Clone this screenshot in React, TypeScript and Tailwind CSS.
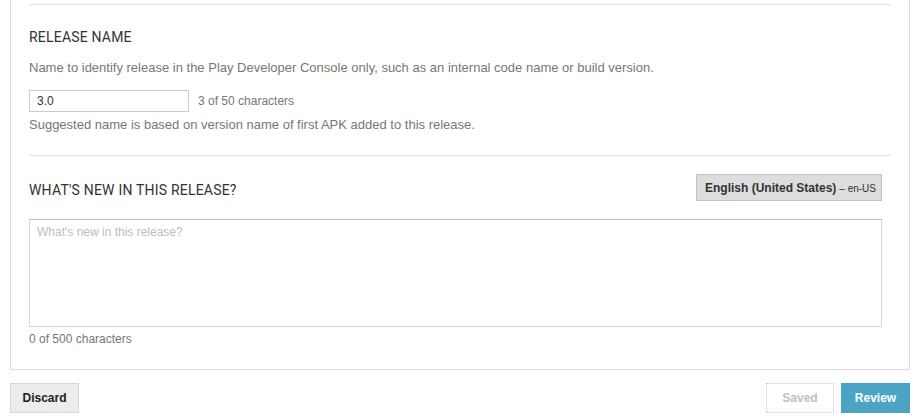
import React from "react";

const arial = { fontFamily: '"Liberation Sans", Arial, sans-serif' };

export default function App() {
  return (
    <div className="w-[923px] h-[419px] bg-white overflow-hidden pl-[10px] pr-[13px]" style={arial}>
      <div className="border border-t-0 border-[#dcdcdc] pl-[18px] pr-[18px] pb-[22px]">
        <div className="pt-[4px]">
          <div className="border-t border-[#e0e0e0]" />
        </div>
        <div className="pt-[22px] pb-[22px]">
          <h2 className="text-[14px] leading-[20px] tracking-[0.2px] text-[#333] uppercase" style={{ fontFamily: "Roboto, sans-serif" }}>
            Release name
          </h2>
          <p className="mt-[13px] text-[13px] leading-[16px] text-[#777]">
            Name to identify release in the Play Developer Console only, such as an internal code name or build version.
          </p>
          <div className="mt-[14px] flex items-center gap-[9px]">
            <div className="w-[160px] h-[22px] border border-[#cccccc] px-[7px] flex items-center text-[12px] text-[#333]">
              3.0
            </div>
            <span className="text-[12px] text-[#777]">3 of 50 characters</span>
          </div>
          <p className="mt-[5px] text-[13px] leading-[16px] text-[#777]">
            Suggested name is based on version name of first APK added to this release.
          </p>
        </div>
        <div className="border-t border-[#e0e0e0]" />
        <div className="pt-[18px] pr-[9px]">
          <div className="flex items-start justify-between h-[27px]">
            <h2 className="mt-[6px] text-[14px] leading-[20px] tracking-[0.2px] text-[#333] uppercase" style={{ fontFamily: "Roboto, sans-serif" }}>
              What's new in this release?
            </h2>
            <div className="h-[27px] w-[186px] bg-[#dddddd] border border-[#c2c2c2] flex items-center justify-center whitespace-nowrap">
              <div className="flex items-baseline gap-[3px] pl-[3px] text-[#333]">
                <span className="text-[12px] font-bold">English (United States)</span>
                <span className="text-[10px]">– en-US</span>
              </div>
            </div>
          </div>
          <div className="mt-[18px] h-[108px] border border-[#d6d6d6] border-t-[#bdbdbd] px-[7px] pt-[3px] text-[12px] text-[#bdbdbd]">
            What's new in this release?
          </div>
          <p className="mt-[4px] text-[12px] leading-[16px] text-[#777]">0 of 500 characters</p>
        </div>
      </div>
      <div className="mt-[13px] flex items-center justify-between">
        <button className="h-[30px] w-[69px] bg-[#ececec] border border-[#d8d8d8] text-[12px] font-bold text-[#222]">
          Discard
        </button>
        <div className="flex gap-[7px]">
          <button className="h-[30px] w-[68px] bg-white border border-dotted border-[#cccccc] text-[12px] font-bold text-[#c0c0c0]">
            Saved
          </button>
          <button className="h-[30px] w-[69px] bg-[#4ca4c5] text-[12px] font-bold text-white">
            Review
          </button>
        </div>
      </div>
    </div>
  );
}
